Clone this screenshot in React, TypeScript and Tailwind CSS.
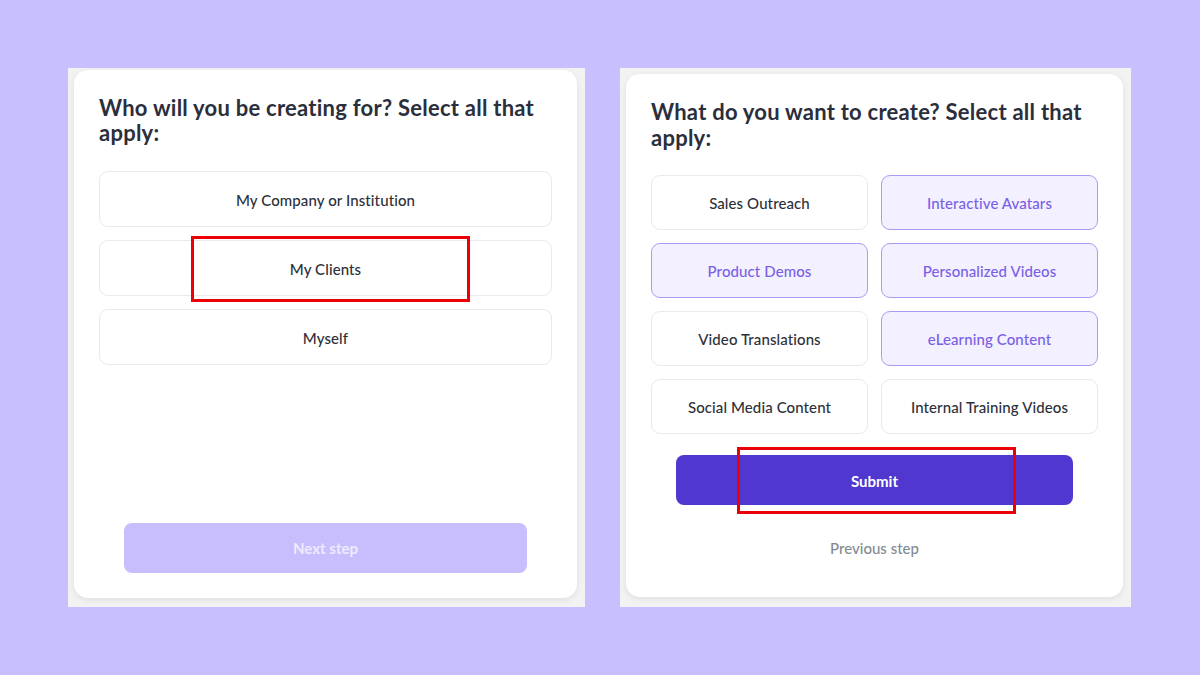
import React from 'react';

const font = { fontFamily: 'Lato, "Noto Sans", sans-serif' };

const audience = ['My Company or Institution', 'My Clients', 'Myself'];

const goals = [
  { label: 'Sales Outreach', selected: false },
  { label: 'Interactive Avatars', selected: true },
  { label: 'Product Demos', selected: true },
  { label: 'Personalized Videos', selected: true },
  { label: 'Video Translations', selected: false },
  { label: 'eLearning Content', selected: true },
  { label: 'Social Media Content', selected: false },
  { label: 'Internal Training Videos', selected: false },
];

function Option({ label, selected }: { label: string; selected?: boolean }) {
  return (
    <button
      type="button"
      className={`flex w-full items-center justify-center rounded-[9px] border pt-[2px] text-[15px] font-medium tracking-[0.1px] ${
        selected ? 'border-[#a99cf3] bg-[#f3f1ff] text-[#7a60e6]' : 'border-[#e9e9ee] bg-white text-[#2d3039]'
      }`}
    >
      {label}
    </button>
  );
}

export default function App() {
  return (
    <div className="relative h-[675px] w-[1200px] overflow-hidden bg-[#c8c0fe]" style={font}>
      <div className="flex gap-[35px] pl-[68px] pt-[68px]">
        {/* Left step */}
        <div className="h-[539px] w-[517px] bg-[#f2f2f2] pb-[9px] pl-[6px] pr-[8px] pt-[2px]">
          <div className="flex h-full flex-col rounded-[14px] bg-white px-[25px] pb-[25px] pt-[25px] shadow-[0_2px_6px_rgba(0,0,0,0.08)]">
            <h2 className="text-[22px] font-bold leading-[25px] tracking-[0.25px] text-[#2b2e3b]">
              Who will you be creating for? Select all that apply:
            </h2>
            <div className="mt-[26px] flex flex-col gap-[13px]">
              {audience.map((a) => (
                <div key={a} className="flex h-[56px]">
                  <Option label={a} />
                </div>
              ))}
            </div>
            <div className="mt-auto px-[25px]">
              <button
                type="button"
                className="h-[50px] w-full rounded-[8px] bg-[#c8befe] text-[15px] font-bold text-[#efebff]"
              >
                Next step
              </button>
            </div>
          </div>
        </div>

        {/* Right step */}
        <div className="h-[539px] w-[511px] bg-[#f2f2f2] pb-[10px] pl-[6px] pr-[8px] pt-[6px]">
          <div className="flex h-full flex-col rounded-[14px] bg-white px-[25px] pt-[25px] shadow-[0_2px_6px_rgba(0,0,0,0.08)]">
            <h2 className="text-[22px] font-bold leading-[26px] tracking-[0.25px] text-[#2b2e3b]">
              What do you want to create? Select all that apply:
            </h2>
            <div className="mt-[24px] grid grid-cols-2 gap-[13px]">
              {goals.map((g) => (
                <div key={g.label} className="flex h-[55px]">
                  <Option label={g.label} selected={g.selected} />
                </div>
              ))}
            </div>
            <div className="mt-[21px] px-[25px]">
              <button
                type="button"
                className="h-[50px] w-full rounded-[8px] bg-[#4f37d0] pt-[2px] text-[15px] font-bold text-white"
              >
                Submit
              </button>
            </div>
            <button type="button" className="mt-[33px] text-[15px] font-medium leading-[20px] text-[#858a94]">
              Previous step
            </button>
          </div>
        </div>
      </div>

      {/* annotation boxes */}
      <div className="absolute left-[191px] top-[236px] h-[66px] w-[279px] border-[3px] border-[#ec0008]" />
      <div className="absolute left-[737px] top-[447px] h-[67px] w-[279px] border-[3px] border-[#ec0008]" />
    </div>
  );
}
